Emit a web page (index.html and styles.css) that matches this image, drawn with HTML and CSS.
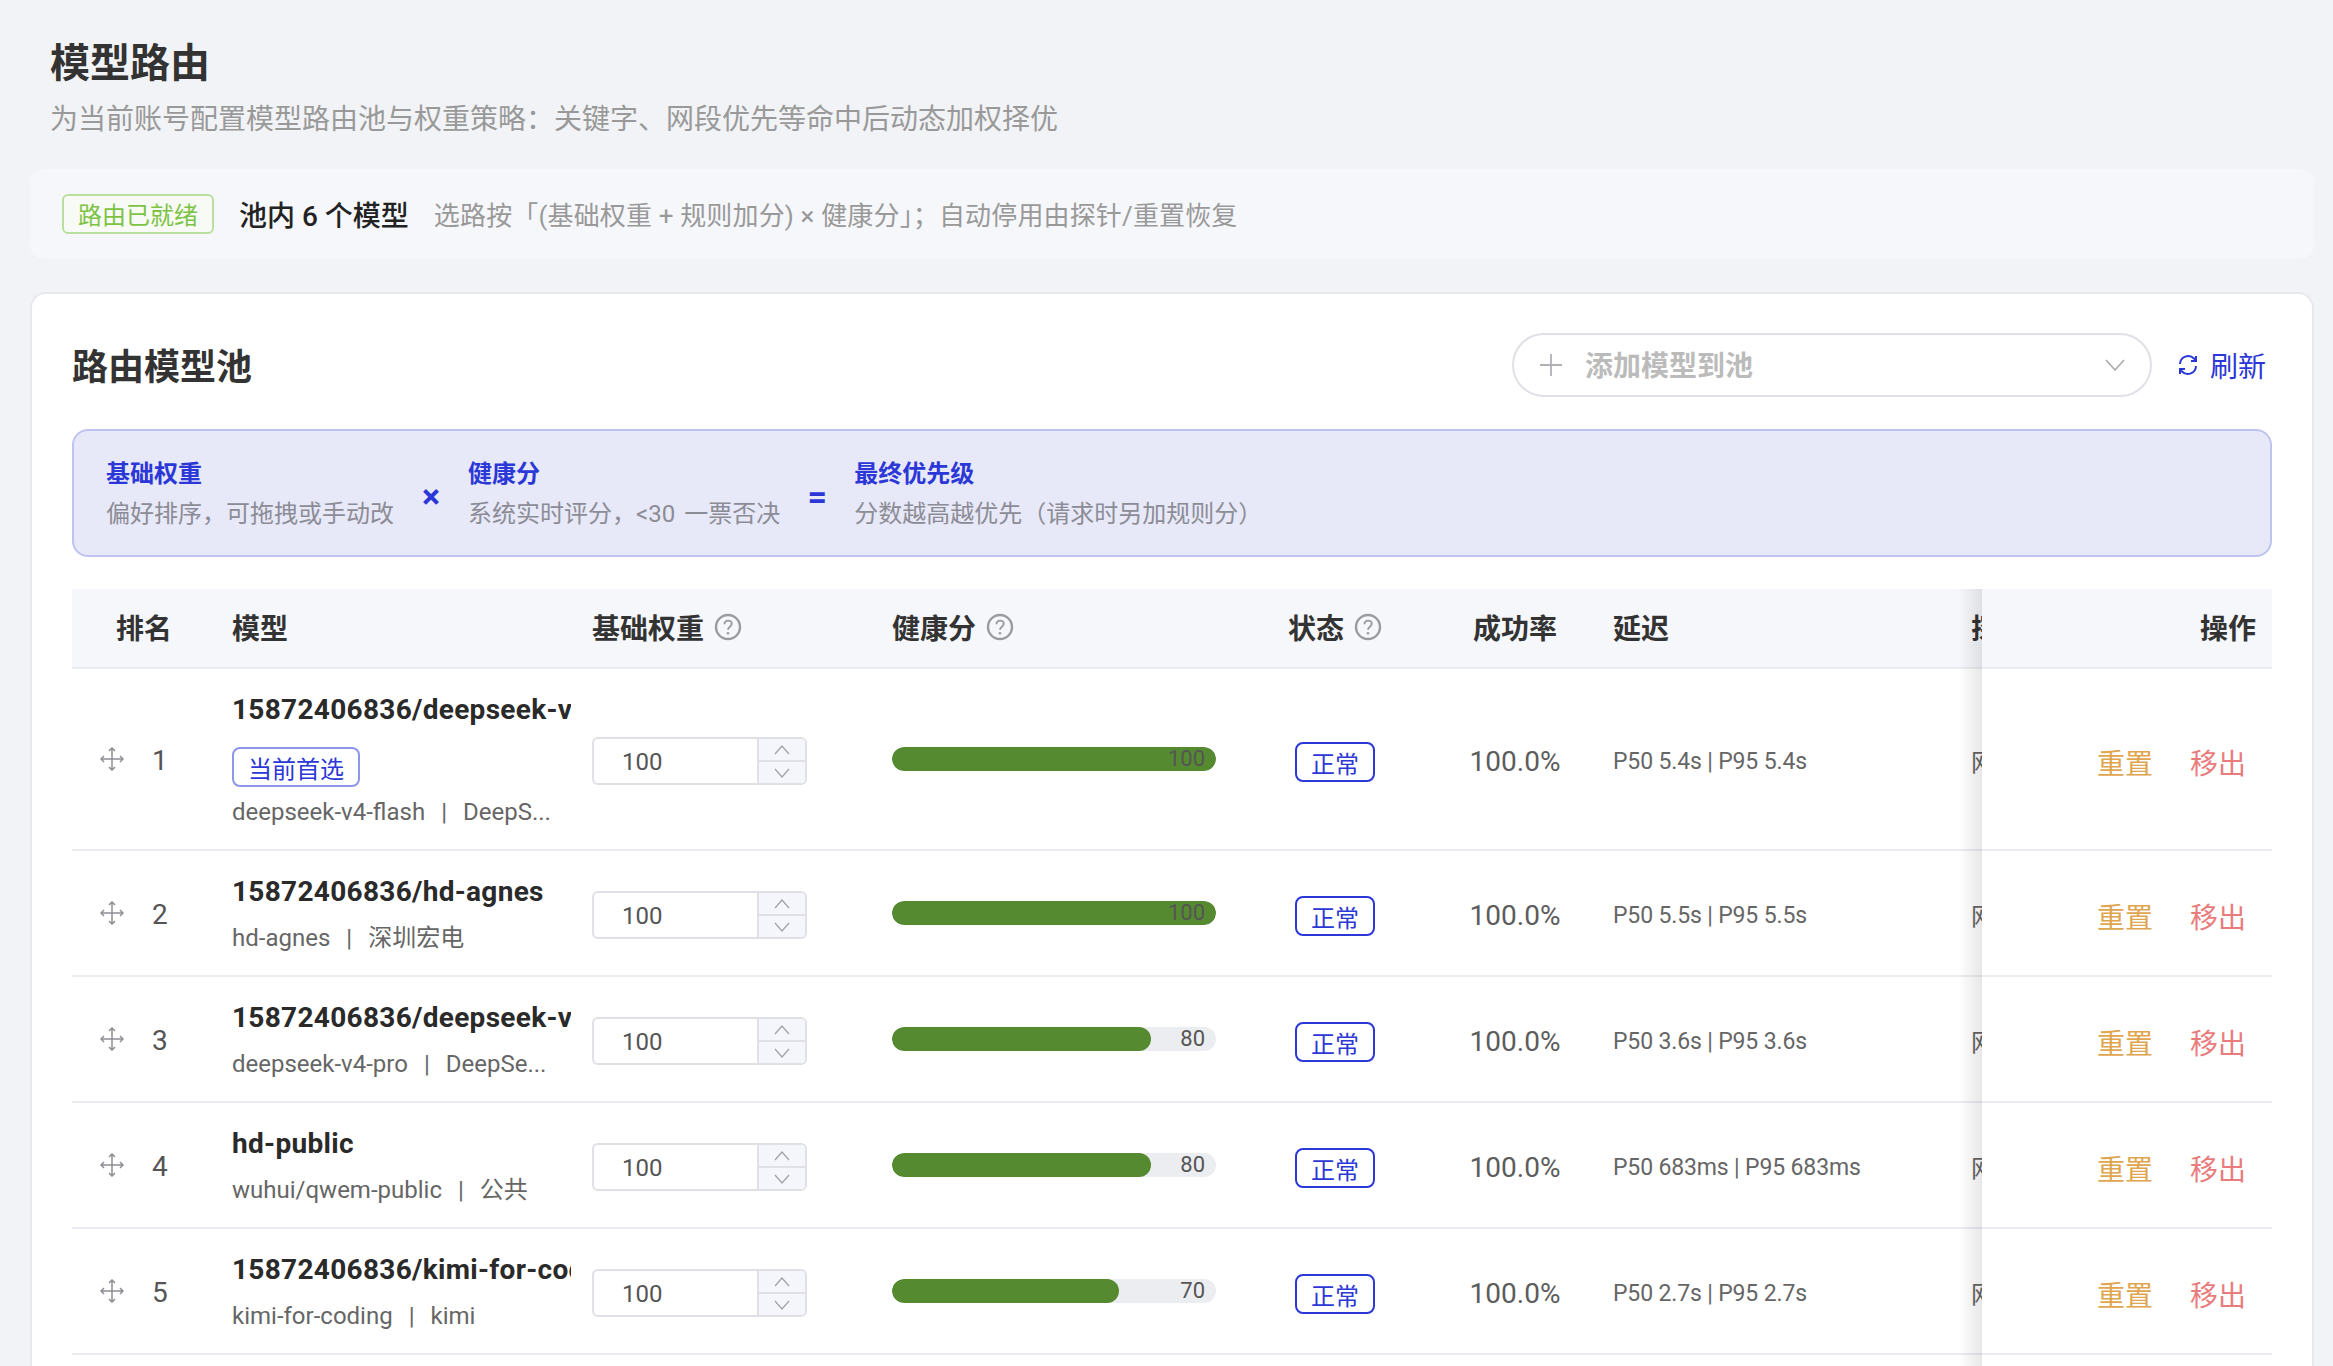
FILE: index.html
```html
<!DOCTYPE html>
<html lang="zh-CN">
<head>
<meta charset="utf-8">
<title>模型路由</title>
<link rel="stylesheet" href="styles.css">
</head>
<body>
<svg class="sprite" aria-hidden="true">
  <symbol id="i-move" viewBox="0 0 24 24"><path d="M12 1v22M1 12h22M9 4l3-3 3 3M9 20l3 3 3-3M4 9l-3 3 3 3M20 9l3 3-3 3" fill="none" stroke="currentColor" stroke-width="1.5"/></symbol>
  <symbol id="i-up" viewBox="0 0 16 10"><path d="M1 9l7-8 7 8" fill="none" stroke="currentColor" stroke-width="1.2"/></symbol>
  <symbol id="i-down" viewBox="0 0 16 10"><path d="M1 1l7 8 7-8" fill="none" stroke="currentColor" stroke-width="1.2"/></symbol>
  <symbol id="i-help" viewBox="0 0 28 28"><circle cx="14" cy="14" r="12" fill="none" stroke="currentColor" stroke-width="2.4"/><path d="M10.4 11.2c0-2.200 1.600-3.600 3.700-3.600s3.600 1.300 3.600 3.200c0 2.800-3.700 3-3.700 6" fill="none" stroke="currentColor" stroke-width="1.900"/><circle cx="14" cy="20.300" r="1.300" fill="currentColor"/></symbol>
</svg>
<main class="page">
  <header class="page-head">
    <h1 class="page-title">模型路由</h1>
    <p class="page-sub">为当前账号配置模型路由池与权重策略：关键字、网段优先等命中后动态加权择优</p>
  </header>

  <section class="summary">
    <span class="ready-tag">路由已就绪</span>
    <span class="summary-count">池内 6 个模型</span>
    <span class="summary-desc">选路按「(基础权重 + 规则加分) × 健康分」；自动停用由探针/重置恢复</span>
  </section>

  <section class="card">
    <div class="card-head">
      <h2 class="card-title">路由模型池</h2>
      <div class="card-tools">
        <div class="add-select">
          <svg class="add-plus" viewBox="0 0 24 24"><path d="M12 1v22M1 12h22" fill="none" stroke="currentColor" stroke-width="1.800"/></svg>
          <span class="add-label">添加模型到池</span>
          <svg class="add-chev" viewBox="0 0 20 12"><path d="M1 1l9 10 9-10" fill="none" stroke="currentColor" stroke-width="1.500"/></svg>
        </div>
        <button class="refresh" type="button">
          <svg class="refresh-icon" viewBox="0 0 24 24"><path d="M4 11a8.200 8.200 0 0 1 14-5.500l2 2M20 3v5h-5M20 13a8.200 8.200 0 0 1-14 5.500l-2-2M4 21v-5h5" fill="none" stroke="currentColor" stroke-width="2"/></svg>
          <span>刷新</span>
        </button>
      </div>
    </div>

    <div class="formula">
      <div class="term"><b class="term-name">基础权重</b><span class="term-desc">偏好排序，可拖拽或手动改</span></div>
      <span class="op">×</span>
      <div class="term"><b class="term-name">健康分</b><span class="term-desc">系统实时评分，&lt;30 一票否决</span></div>
      <span class="op">=</span>
      <div class="term"><b class="term-name">最终优先级</b><span class="term-desc">分数越高越优先（请求时另加规则分）</span></div>
    </div>

    <div class="table-wrap">
      <table class="pool">
        <colgroup>
          <col class="c-rank"><col class="c-model"><col class="c-weight"><col class="c-health"><col class="c-status"><col class="c-rate"><col class="c-lat"><col class="c-probe"><col class="c-act">
        </colgroup>
        <thead>
          <tr>
            <th class="center">排名</th>
            <th class="th-model">模型</th>
            <th><span class="th-help">基础权重<svg class="help"><use href="#i-help"/></svg></span></th>
            <th><span class="th-help">健康分<svg class="help"><use href="#i-help"/></svg></span></th>
            <th class="center"><span class="th-help">状态<svg class="help"><use href="#i-help"/></svg></span></th>
            <th class="center">成功率</th>
            <th>延迟</th>
            <th>探针</th>
            <th class="sticky right">操作</th>
          </tr>
        </thead>
        <tbody>
          <tr>
            <td><div class="rank"><svg class="move"><use href="#i-move"/></svg><span class="rank-no">1</span></div></td>
            <td class="td-model"><div class="name">15872406836/deepseek-v4-flash</div><span class="pref-tag">当前首选</span><div class="meta">deepseek-v4-flash<span class="sep">|</span>DeepS...</div></td>
            <td><div class="num"><span class="num-val">100</span><span class="num-btns"><span class="num-btn"><svg class="chev"><use href="#i-up"/></svg></span><span class="num-btn"><svg class="chev"><use href="#i-down"/></svg></span></span></div></td>
            <td><div class="bar"><div class="bar-fill" style="width:100%"></div><span class="bar-val">100</span></div></td>
            <td class="center"><span class="state">正常</span></td>
            <td class="center rate">100.0%</td>
            <td class="lat">P50 5.4s | P95 5.4s</td>
            <td class="probe">网段</td>
            <td class="sticky actions"><span class="reset">重置</span><span class="remove">移出</span></td>
          </tr>
          <tr>
            <td><div class="rank"><svg class="move"><use href="#i-move"/></svg><span class="rank-no">2</span></div></td>
            <td class="td-model"><div class="name">15872406836/hd-agnes</div><div class="meta">hd-agnes<span class="sep">|</span>深圳宏电</div></td>
            <td><div class="num"><span class="num-val">100</span><span class="num-btns"><span class="num-btn"><svg class="chev"><use href="#i-up"/></svg></span><span class="num-btn"><svg class="chev"><use href="#i-down"/></svg></span></span></div></td>
            <td><div class="bar"><div class="bar-fill" style="width:100%"></div><span class="bar-val">100</span></div></td>
            <td class="center"><span class="state">正常</span></td>
            <td class="center rate">100.0%</td>
            <td class="lat">P50 5.5s | P95 5.5s</td>
            <td class="probe">网段</td>
            <td class="sticky actions"><span class="reset">重置</span><span class="remove">移出</span></td>
          </tr>
          <tr>
            <td><div class="rank"><svg class="move"><use href="#i-move"/></svg><span class="rank-no">3</span></div></td>
            <td class="td-model"><div class="name">15872406836/deepseek-v4-pro</div><div class="meta">deepseek-v4-pro<span class="sep">|</span>DeepSe...</div></td>
            <td><div class="num"><span class="num-val">100</span><span class="num-btns"><span class="num-btn"><svg class="chev"><use href="#i-up"/></svg></span><span class="num-btn"><svg class="chev"><use href="#i-down"/></svg></span></span></div></td>
            <td><div class="bar"><div class="bar-fill" style="width:80%"></div><span class="bar-val">80</span></div></td>
            <td class="center"><span class="state">正常</span></td>
            <td class="center rate">100.0%</td>
            <td class="lat">P50 3.6s | P95 3.6s</td>
            <td class="probe">网段</td>
            <td class="sticky actions"><span class="reset">重置</span><span class="remove">移出</span></td>
          </tr>
          <tr>
            <td><div class="rank"><svg class="move"><use href="#i-move"/></svg><span class="rank-no">4</span></div></td>
            <td class="td-model"><div class="name">hd-public</div><div class="meta">wuhui/qwem-public<span class="sep">|</span>公共</div></td>
            <td><div class="num"><span class="num-val">100</span><span class="num-btns"><span class="num-btn"><svg class="chev"><use href="#i-up"/></svg></span><span class="num-btn"><svg class="chev"><use href="#i-down"/></svg></span></span></div></td>
            <td><div class="bar"><div class="bar-fill" style="width:80%"></div><span class="bar-val">80</span></div></td>
            <td class="center"><span class="state">正常</span></td>
            <td class="center rate">100.0%</td>
            <td class="lat">P50 683ms | P95 683ms</td>
            <td class="probe">网段</td>
            <td class="sticky actions"><span class="reset">重置</span><span class="remove">移出</span></td>
          </tr>
          <tr>
            <td><div class="rank"><svg class="move"><use href="#i-move"/></svg><span class="rank-no">5</span></div></td>
            <td class="td-model"><div class="name">15872406836/kimi-for-coding</div><div class="meta">kimi-for-coding<span class="sep">|</span>kimi</div></td>
            <td><div class="num"><span class="num-val">100</span><span class="num-btns"><span class="num-btn"><svg class="chev"><use href="#i-up"/></svg></span><span class="num-btn"><svg class="chev"><use href="#i-down"/></svg></span></span></div></td>
            <td><div class="bar"><div class="bar-fill" style="width:70%"></div><span class="bar-val">70</span></div></td>
            <td class="center"><span class="state">正常</span></td>
            <td class="center rate">100.0%</td>
            <td class="lat">P50 2.7s | P95 2.7s</td>
            <td class="probe">网段</td>
            <td class="sticky actions"><span class="reset">重置</span><span class="remove">移出</span></td>
          </tr>
          <tr class="filler">
            <td colspan="8"></td>
            <td class="sticky"></td>
          </tr>
        </tbody>
      </table>
    </div>
  </section>
</main>
</body>
</html>
```

FILE: styles.css
```css
* { box-sizing: border-box; }
html, body { margin: 0; height: 100%; overflow: hidden; }
body {
  background: #f2f3f6;
  color: #333;
  font-family: Roboto, "Noto Sans CJK SC", sans-serif;
}
.sprite { display: none; }
.page { height: 1366px; overflow: hidden; padding: 0 19px 0 30px; }

.page-head { padding: 40px 0 0 20px; }
.page-title { margin: 0; font-size: 40px; line-height: 48px; font-weight: 700; color: #333; }
.page-sub { margin: 13px 0 0; font-size: 28px; line-height: 38px; color: #999; }

.summary {
  display: flex; align-items: center;
  height: 90px; margin-top: 30px; padding: 0 32px;
  background: #f6f7fb; border-radius: 14px;
}
.ready-tag {
  display: flex; align-items: center; justify-content: center;
  width: 152px; height: 40px; padding-bottom: 2px;
  border: 2px solid #b8e09c; border-radius: 6px; background: #f8faf6;
  color: #7cc344; font-size: 24px;
}
.summary-count { margin-left: 25px; font-size: 28px; font-weight: 500; color: #222; }
.summary-desc { margin: -2px 0 0 25px; font-size: 26px; letter-spacing: .15px; color: #999; }

.card {
  height: 1100px; margin-top: 33px; padding: 0 40px;
  background: #fff; border: 2px solid #e8e9ee; border-radius: 16px;
}
.card-head { display: flex; align-items: center; justify-content: space-between; height: 135px; padding-top: 4px; }
.card-title { margin: 0; font-size: 36px; font-weight: 700; color: #333; }
.card-tools { display: flex; align-items: center; margin-top: 2px; }
.add-select {
  display: flex; align-items: center;
  width: 640px; height: 64px; padding: 0 25px;
  border: 2px solid #e0e0e6; border-radius: 32px; background: #fff;
}
.add-plus { width: 24px; height: 24px; color: #b0b0b6; }
.add-label { margin: -2px 0 0 22px; font-size: 28px; font-weight: 700; color: #bbb; }
.add-chev { width: 20px; height: 12px; margin-left: auto; color: #a8a8ae; }
.refresh {
  display: flex; align-items: center; gap: 10px;
  margin-left: 24px; padding: 0 6px 0 0;
  border: 0; background: none;
  color: #2b37d6; font: inherit; font-size: 28px;
}
.refresh-icon { width: 24px; height: 24px; }

.formula {
  display: flex; align-items: center;
  height: 128px; padding: 2px 32px 0;
  background: #e7e9f8; border: 2px solid #bfc3f0; border-radius: 16px;
}
.term { display: flex; flex-direction: column; gap: 7px; }
.term-name { font-size: 24px; line-height: 33px; font-weight: 700; color: #2b37d6; }
.term-desc { font-size: 24px; line-height: 33px; word-spacing: 3px; color: #8c8c96; }
.op { width: 74px; margin-top: 3px; text-align: center; font-size: 34px; font-weight: 700; color: #2b37d6; }

.table-wrap { width: 2200px; margin-top: 32px; overflow: hidden; height: 900px; }
.pool { width: 2325px; table-layout: fixed; border-collapse: separate; border-spacing: 0; }
.c-rank { width: 144px; } .c-model { width: 360px; } .c-weight { width: 300px; }
.c-health { width: 361px; } .c-status { width: 196px; } .c-rate { width: 164px; }
.c-lat { width: 358px; } .c-probe { width: 152px; } .c-act { width: 290px; }

.pool th {
  height: 80px; padding: 0 16px 2px;
  background: #f6f7fb; border-bottom: 2px solid #ebecf1;
  font-size: 28px; font-weight: 700; color: #333; text-align: left; white-space: nowrap;
}
.pool td {
  height: 126px; padding: 0 16px;
  background: #fff; border-bottom: 2px solid #ebecf1;
  white-space: nowrap; overflow: hidden;
}
.pool th.center, .pool td.center { text-align: center; }
.pool th.right { text-align: right; }
.th-help { display: inline-flex; align-items: center; gap: 10px; }
.help { width: 28px; height: 28px; color: #9a9aa0; }

.pool .sticky { position: sticky; right: 0; overflow: visible; z-index: 1; }
.pool .sticky::before {
  content: ""; position: absolute; top: 0; bottom: -2px; left: -24px; width: 24px;
  background: linear-gradient(to right, rgba(0, 0, 0, 0), rgba(0, 0, 0, .09));
}

.rank { display: flex; align-items: center; gap: 28px; padding-left: 12px; font-size: 28px; color: #555; }
.rank-no { margin-top: 2px; }
.move { width: 24px; height: 24px; color: #8e8e94; }

.pool .td-model { padding: 22px 5px 18px 16px; }
.name { overflow: hidden; font-size: 28px; line-height: 38px; font-weight: 700; letter-spacing: .3px; color: #2a2a2a; }
.meta { margin-top: 8px; font-size: 24px; line-height: 38px; color: #666; }
.sep { margin: 0 16px; }
.pref-tag {
  display: flex; align-items: center; justify-content: center;
  width: 128px; height: 40px; margin-top: 18px;
  border: 2px solid #8f96e8; border-radius: 8px; background: #fff;
  color: #2b37d6; font-size: 24px;
}
.pref-tag + .meta { margin-top: 6px; }

.num {
  display: flex; width: 215px; height: 48px; margin-top: 4px;
  border: 2px solid #e0e0e6; border-radius: 6px; overflow: hidden;
}
.num-val { flex: 1; padding-left: 28px; font-size: 24px; line-height: 46px; color: #555; }
.num-btns { display: flex; flex-direction: column; width: 48px; border-left: 2px solid #e0e0e6; background: #f5f6fb; }
.num-btn { flex: 1; display: flex; align-items: center; justify-content: center; }
.num-btn + .num-btn { border-top: 2px solid #e0e0e6; }
.chev { width: 16px; height: 10px; color: #a0a0a6; }

.bar { position: relative; width: 324px; height: 24px; border-radius: 12px; background: #ecedf1; overflow: hidden; }
.bar-fill { height: 100%; border-radius: 12px; background: #568a31; }
.bar-val { position: absolute; top: 0; right: 11px; font-size: 22px; line-height: 24px; color: #555; }

.state {
  display: inline-flex; align-items: center; justify-content: center;
  width: 80px; height: 40px; margin-top: 6px;
  border: 2px solid #2b37d6; border-radius: 8px;
  color: #2b37d6; font-size: 24px;
}
.pool .rate { padding-top: 4px; font-size: 28px; color: #5c5c5c; }
.pool .lat { padding-top: 4px; font-size: 23px; letter-spacing: -.15px; color: #666; }
.pool .probe { padding-top: 3px; font-size: 24px; color: #666; }
.pool td.actions { padding: 5px 26px 0 0; text-align: right; font-size: 28px; }
.reset { color: #e0a54f; }
.remove { margin-left: 37px; color: #e87c7c; }

.filler td { height: 200px; border-bottom: 0; }
```
